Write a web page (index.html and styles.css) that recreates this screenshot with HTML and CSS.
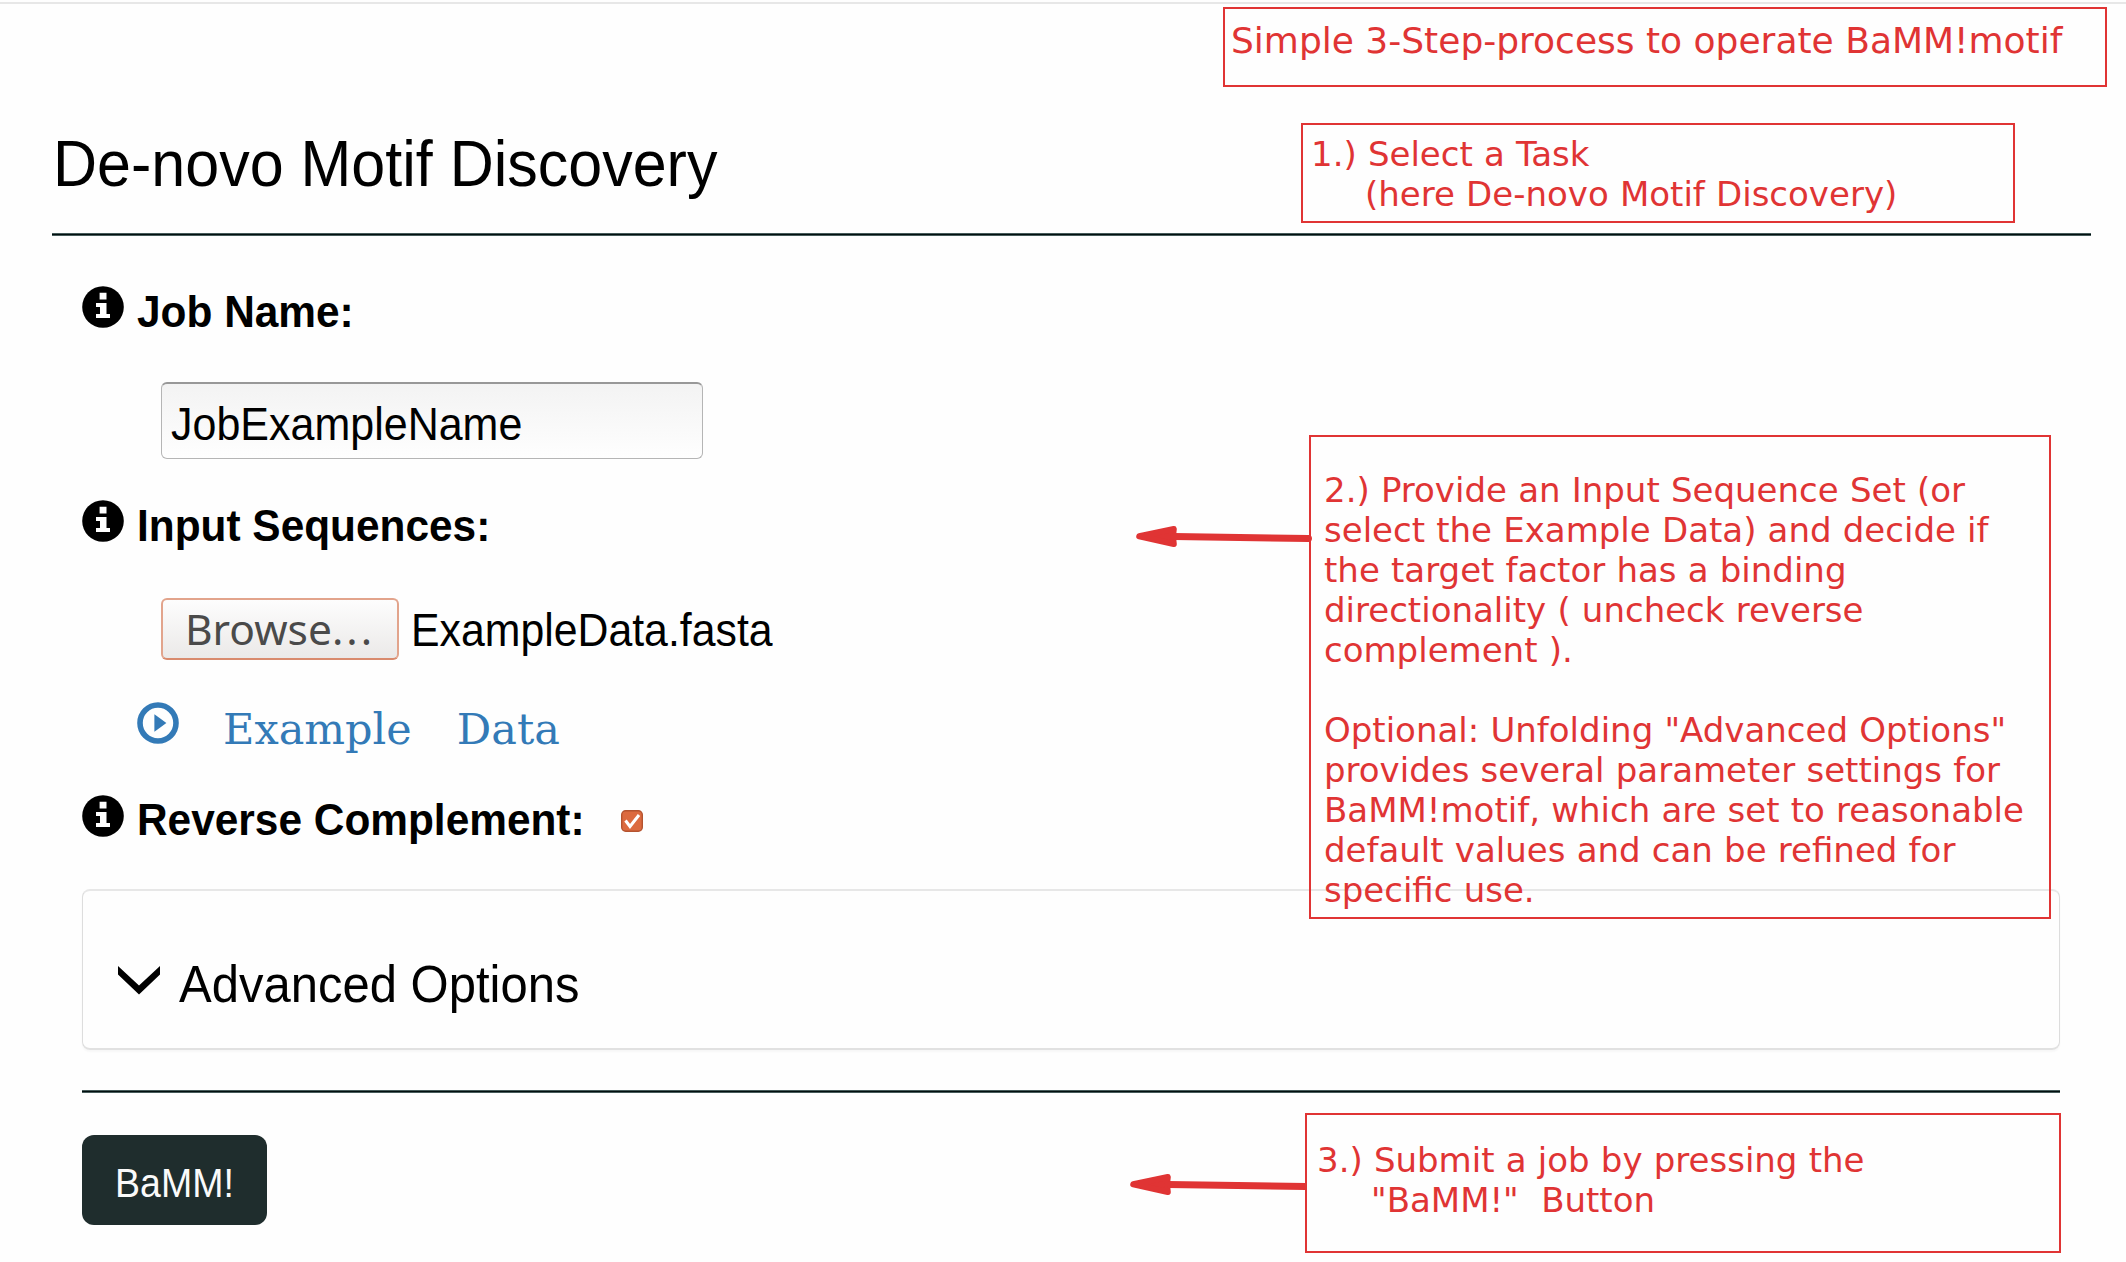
FILE: index.html
```html
<!DOCTYPE html>
<html lang="en">
<head>
<meta charset="utf-8">
<title>BaMM!motif - De-novo Motif Discovery</title>
<link rel="stylesheet" href="styles.css">
</head>
<body>
<svg class="defs" aria-hidden="true">
  <symbol id="info" viewBox="0 0 42 42">
    <circle cx="21" cy="21" r="20.8"/>
    <path fill="#fff" d="M17.600 6.800h6.900v6.800h-6.900zM14 17h10.500v11h3.500v4H14v-4h4v-7h-4z"/>
  </symbol>
</svg>
<div class="topline"></div>
<main class="page">
  <h1 class="title sans">De-novo Motif Discovery</h1>
  <div class="rule"></div>
  <form class="form">
    <div class="field">
      <svg class="icon"><use href="#info"/></svg>
      <label class="label sans">Job Name:</label>
    </div>
    <div class="textbox"><span class="value sans">JobExampleName</span></div>
    <div class="field">
      <svg class="icon"><use href="#info"/></svg>
      <label class="label sans">Input Sequences:</label>
    </div>
    <div class="file">
      <button type="button" class="browse">Browse<span class="dots">...</span></button>
      <span class="value sans">ExampleData.fasta</span>
    </div>
    <a class="example">
      <svg class="icon" viewBox="0 0 42 42"><circle cx="21" cy="21" r="18" fill="none" stroke="currentColor" stroke-width="5.600"/><path fill="currentColor" d="M17.400 12.200 29.400 21 17.400 29.800z"/></svg>
      <span>Example</span><span>Data</span>
    </a>
    <div class="field field-check">
      <svg class="icon"><use href="#info"/></svg>
      <label class="label sans">Reverse Complement:</label>
      <svg class="check" viewBox="0 0 22 22"><rect x=".7" y=".7" width="20.600" height="20.600" rx="4" fill="#dc6a3f" stroke="#b4532f" stroke-width="1.400"/><path d="M4.500 10.500 9 16.500 18 5" fill="none" stroke="#fff" stroke-width="3"/></svg>
    </div>
    <div class="panel">
      <svg class="chevron" viewBox="0 0 42 29"><path d="M0 0V8.500L21 28.500 42 8.500V0L21 19.500z"/></svg>
      <h2 class="subtitle sans">Advanced Options</h2>
    </div>
    <div class="rule"></div>
    <button type="button" class="submit"><span class="sans">BaMM!</span></button>
  </form>
</main>
<div class="note note-title">Simple 3-Step-process to operate BaMM!motif</div>
<div class="note note-task">1.) Select a Task
<span class="indent">(here De-novo Motif Discovery)</span></div>
<div class="note note-input">2.) Provide an Input Sequence Set (or
select the Example Data) and decide if
the target factor has a binding
directionality ( uncheck reverse
complement ).

Optional: Unfolding "Advanced Options"
provides several parameter settings for
BaMM!motif, which are set to reasonable
default values and can be refined for
specific use.</div>
<div class="note note-submit">3.) Submit a job by pressing the
<span class="indent">"BaMM!"  Button</span></div>
<svg class="arrow arrow-input" viewBox="0 0 176 22"><path class="head" d="M3.200 10.300 37.800 3 37 10.500 37.800 18z"/><path class="shaft" stroke-linecap="round" d="M38 10.500 172.500 12.500"/></svg>
<svg class="arrow arrow-submit" viewBox="0 0 176 22"><path class="head" d="M3.200 10.300 37.800 3 37 10.500 37.800 18z"/><path class="shaft" d="M38 10.500 176 12.500"/></svg>
</body>
</html>
```
FILE: styles.css
```css
* { box-sizing: border-box; }

body {
  position: relative;
  margin: 0;
  width: 2126px;
  height: 1262px;
  overflow: hidden;
  background: #fefefe;
  color: #000;
  font-family: "Liberation Sans", Arial, sans-serif;
}

.defs { position: absolute; width: 0; height: 0; }

.topline { height: 4px; border-bottom: 2px solid #e7e7e7; }

.page { padding: 131px 35px 0 52px; }

.sans {
  display: block;
  margin: 0;
  line-height: 1;
  white-space: nowrap;
  transform: scaleY(1.06);
  transform-origin: 0 .83em;
}

.title { font-size: 61px; font-weight: 400; margin-bottom: 37px; text-indent: 1px; }

.rule {
  height: 3px;
  background: linear-gradient(#465b5a 0 1px, #020f0f 1px 2px, #465b5a 2px);
}

.form { padding: 50px 31px 0 30px; }

.field { display: flex; align-items: flex-start; height: 48px; }
.icon { width: 42px; height: 42px; flex: none; }
.label { font-size: 42.4px; font-weight: 700; margin: 6px 0 0 13px; }
.field-check .label { margin-top: 5px; }
.value { font-size: 43px; }

.textbox {
  width: 542px;
  height: 77px;
  margin: 48px 0 41px 79px;
  padding: 20px 0 0 9px;
  border: 1px solid #b5b5b5;
  border-top: 2px solid #989898;
  border-radius: 6px;
  background: linear-gradient(#f3f3f3, #fefefe);
}

.file {
  display: flex;
  align-items: flex-start;
  height: 62px;
  margin: 50px 0 42px 79px;
}
.file .value { margin: 12px 0 0 12px; font-size: 42.8px; }

.browse {
  width: 238px;
  height: 62px;
  padding: 0;
  border: 2px solid #e2a48c;
  border-bottom-color: #d98a6d;
  border-radius: 6px;
  background: linear-gradient(#fdfdfd, #ebe9e8);
  color: #4a4a4a;
  font: 42.500px/58px "Noto Sans", sans-serif;
}
.dots { letter-spacing: 3px; }

.example {
  display: flex;
  height: 48px;
  margin: 0 0 45px 55px;
  color: #337ab7;
  font: 43px/1 "DejaVu Serif", serif;
}
.example span { margin: 6px 1px 0 44px; }

.check { width: 22px; height: 22px; margin: 15px 0 0 36px; }

.panel {
  display: flex;
  align-items: flex-start;
  height: 161px;
  margin: 46px 0 40px;
  padding: 75px 0 0 35px;
  border: 1px solid #ddd;
  border-top: 2px solid #e7e7e7;
  border-radius: 8px;
  border-bottom: 2px solid #e1e1e1;
  box-shadow: 0 2px 2px rgba(0, 0, 0, .03);
}
.chevron { width: 42px; height: 29px; }
.subtitle { font-size: 49px; font-weight: 400; margin: -5px 0 0 19px; }

.submit {
  width: 185px;
  height: 90px;
  margin-top: 42px;
  padding: 10px 0 0;
  border: 0;
  border-radius: 12px;
  background: #1f2d2d;
  color: #fafafa;
  font: 37.500px/1 "Liberation Sans", Arial, sans-serif;
}

/* Red walkthrough notes laid over the form */
.note {
  position: absolute;
  border: 2px solid #e03434;
  color: #e03434;
  font: 34px/40px "DejaVu Sans", sans-serif;
  word-spacing: .4px;
  white-space: pre;
}
.note-title { left: 1223px; top: 7px; width: 884px; height: 80px; padding: 12px 0 0 6px; font-size: 36px; word-spacing: 0; }
.note-task { left: 1301px; top: 123px; width: 714px; height: 100px; padding: 9px 0 0 8px; }
.note-input { left: 1309px; top: 435px; width: 742px; height: 484px; padding: 33px 0 0 13px; }
.note-submit { left: 1305px; top: 1113px; width: 756px; height: 140px; padding: 25px 0 0 10px; }
.indent { padding-left: 54px; }

.arrow { position: absolute; width: 176px; height: 22px; overflow: visible; stroke: #e03434; }
.arrow-input { left: 1136px; top: 526px; }
.arrow-submit { left: 1130px; top: 1174px; }
.head { fill: #e03434; stroke-width: 6px; stroke-linejoin: round; }
.shaft { fill: none; stroke-width: 7px; }
```
